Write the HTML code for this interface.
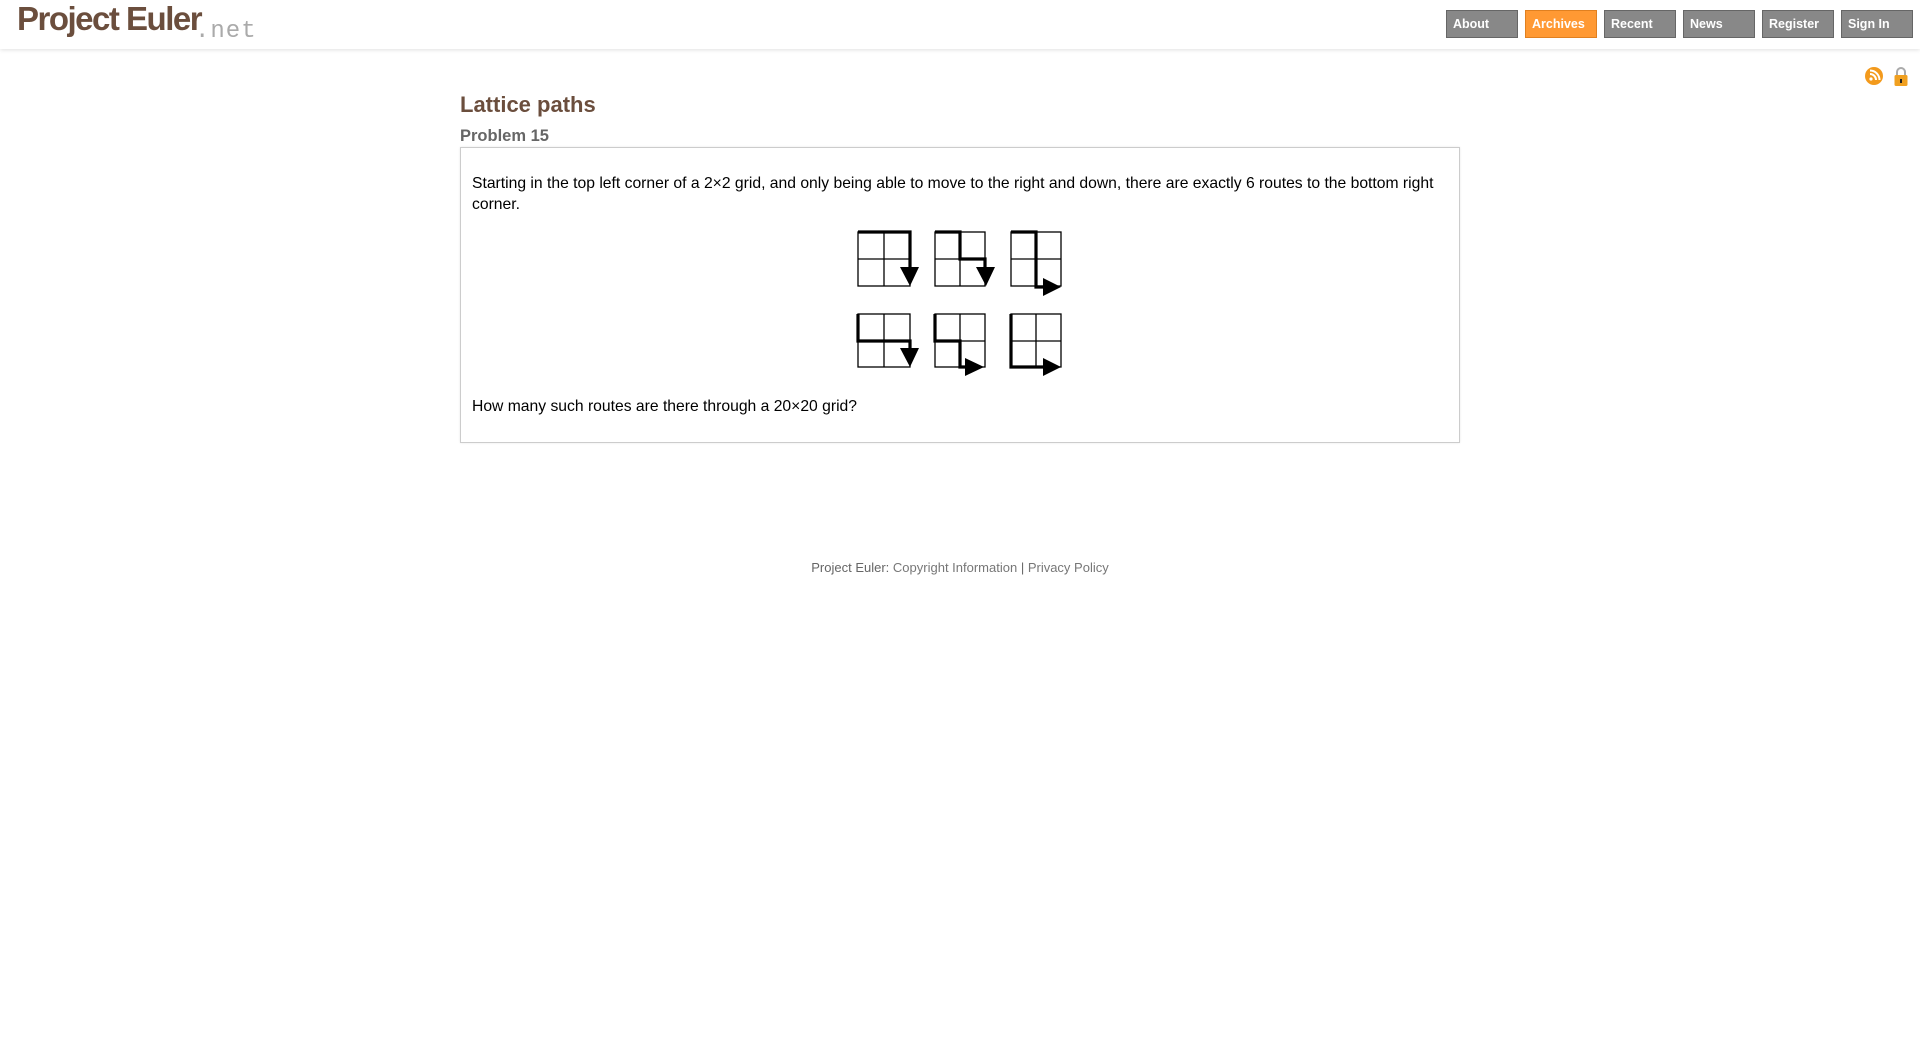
<!DOCTYPE html>
<html><head><meta charset="utf-8"><style>
*{margin:0;padding:0;box-sizing:border-box}
html,body{width:1920px;height:1054px;background:#fff;font-family:"Liberation Sans",sans-serif;overflow:hidden;position:relative}
#hdr{position:absolute;left:0;top:0;width:1920px;height:49px;background:#fff;box-shadow:0 1px 4px rgba(0,0,0,0.12)}
#logo{position:absolute;left:17px;top:0px;font-size:33px;font-weight:bold;color:#6b4e3d;letter-spacing:-1.5px;transform:scaleY(1.0);transform-origin:top left}
#net{position:absolute;left:195px;top:18px;font-family:"Liberation Mono",monospace;font-size:24px;color:#aaa;letter-spacing:1px}
.nb{position:absolute;top:10px;width:72px;height:28px;background:#888;border:1px solid #666;color:#fff;font-weight:bold;font-size:12.5px;line-height:26px;padding-left:6px}
.nb.on{background:#f93;border-color:#e08020}
h2{position:absolute;left:460px;top:92px;font-size:22px;color:#6b4e3d;font-weight:bold}
h3{position:absolute;left:460px;top:127px;font-size:16.5px;color:#666;font-weight:bold}
#box{position:absolute;left:460px;top:147px;width:1000px;height:296px;border:1px solid #ccc;box-shadow:0 0 2px rgba(0,0,0,0.1)}
p{position:absolute;left:11px;font-size:15.7px;line-height:21px;color:#000}
#ft{position:absolute;left:0;width:1920px;top:560px;text-align:center;font-size:13px;color:#666}
#ft span{color:#777}
</style></head><body>
<div id="hdr">
<div id="logo">Project Euler</div><div id="net">.net</div>
<div class="nb" style="left:1446px">About</div>
<div class="nb on" style="left:1525px">Archives</div>
<div class="nb" style="left:1604px">Recent</div>
<div class="nb" style="left:1683px">News</div>
<div class="nb" style="left:1762px">Register</div>
<div class="nb" style="left:1841px">Sign In</div>
</div>
<svg style="position:absolute;left:1864px;top:64px" width="50" height="26">
<circle cx="10" cy="12" r="9" fill="#f39a1c"/>
<circle cx="7" cy="15" r="1.6" fill="#fff"/>
<path d="M6 10a6 6 0 0 1 6 6M6 6.5a9.5 9.5 0 0 1 9.5 9.5" stroke="#fff" stroke-width="2" fill="none"/>
<path d="M33 11V8a4 4 0 0 1 8 0v3" stroke="#aaa" stroke-width="2" fill="none"/>
<rect x="30.5" y="11" width="13" height="11" rx="1.5" fill="#f0a020"/>
<rect x="36" y="15" width="2" height="4" fill="#222"/>
</svg>
<h2>Lattice paths</h2>
<h3>Problem 15</h3>
<div id="box">
<p style="top:25px">Starting in the top left corner of a 2×2 grid, and only being able to move to the right and down, there are exactly 6 routes to the bottom right<br>corner.</p>
<p style="top:248px">How many such routes are there through a 20×20 grid?</p>
</div>
<svg style="position:absolute;left:840px;top:220px" width="240" height="170" viewBox="0 0 240 170">
<g fill="none" stroke="#000" stroke-width="1.3">
<rect x="18" y="12" width="52" height="54"/><path d="M44 12V66M18 39H70"/>
<rect x="95" y="12" width="50" height="54"/><path d="M120 12V66M95 39H145"/>
<rect x="171" y="12" width="50" height="54"/><path d="M196 12V66M171 39H221"/>
<rect x="18" y="94" width="52" height="53"/><path d="M44 94V147M18 121H70"/>
<rect x="95" y="94" width="50" height="53"/><path d="M120 94V147M95 121H145"/>
<rect x="171" y="94" width="50" height="53"/><path d="M196 94V147M171 121H221"/>
</g>
<g fill="none" stroke="#000" stroke-width="3.2">
<path d="M18 12H70V50"/>
<path d="M95 12H120V39H145V50"/>
<path d="M171 12H196V67H206"/>
<path d="M18 94V121H70V130"/>
<path d="M95 94V121H120V147H126"/>
<path d="M171 94V147H205"/>
</g>
<g fill="#000">
<path d="M60 47H79L70 66Z"/>
<path d="M136 47H155L146 66Z"/>
<path d="M203 58V76L221 67Z"/>
<path d="M60 128H79L70 147Z"/>
<path d="M125 138V156L144 147Z"/>
<path d="M203 138V156L221 147Z"/>
</g>
</svg>
<div id="ft">Project Euler: <span>Copyright Information</span> | <span>Privacy Policy</span></div>
</body></html>
